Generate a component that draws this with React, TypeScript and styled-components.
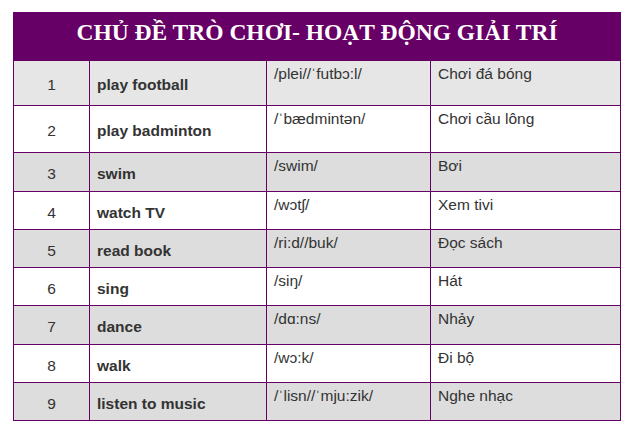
import styled, { createGlobalStyle } from 'styled-components';

type Item = { no: number; word: string; ipa: string; meaning: string; height: number };

const items: Item[] = [
  { no: 1, word: 'play football', ipa: '/plei//ˈfutbɔ:l/', meaning: 'Chơi đá bóng', height: 45 },
  { no: 2, word: 'play badminton', ipa: '/ˈbædmintən/', meaning: 'Chơi cầu lông', height: 47 },
  { no: 3, word: 'swim', ipa: '/swim/', meaning: 'Bơi', height: 39 },
  { no: 4, word: 'watch TV', ipa: '/wɔtʃ/', meaning: 'Xem tivi', height: 38 },
  { no: 5, word: 'read book', ipa: '/ri:d//buk/', meaning: 'Đọc sách', height: 38 },
  { no: 6, word: 'sing', ipa: '/siŋ/', meaning: 'Hát', height: 38 },
  { no: 7, word: 'dance', ipa: '/dɑ:ns/', meaning: 'Nhảy', height: 39 },
  { no: 8, word: 'walk', ipa: '/wɔ:k/', meaning: 'Đi bộ', height: 38 },
  { no: 9, word: 'listen to music', ipa: '/ˈlisn//ˈmju:zik/', meaning: 'Nghe nhạc', height: 38 },
];

const columns = [76, 177, 164, 190];

const GlobalStyle = createGlobalStyle`
  body {
    margin: 0;
    background: #ffffff;
    font-family: "Liberation Sans", Arial, sans-serif;
  }
`;

const Page = styled.div`
  padding: 12px 0 0 13px;
`;

const Table = styled.table`
  width: 607px;
  border-collapse: collapse;
  table-layout: fixed;
  color: #333333;
  font-size: 15.5px;
`;

const Col = styled.col<{ $w: number }>`
  width: ${(p) => p.$w}px;
`;

const TitleRow = styled.tr`
  height: 48px;
`;

const TitleCell = styled.th`
  padding: 0 0 10px;
  background: #660066;
  color: #ffffff;
  font-family: "Liberation Serif", "Times New Roman", serif;
  font-size: 23.5px;
  font-weight: bold;
  text-align: center;
  border: 1px solid #660066;
  line-height: 26px;
`;

const Row = styled.tr<{ $shade: string; $h: number }>`
  background: ${(p) => p.$shade};
  height: ${(p) => p.$h}px;
`;

const Cell = styled.td<{ $top?: boolean; $center?: boolean; $bold?: boolean }>`
  border: 1px solid #660066;
  padding: ${(p) => (p.$top ? '4px 7px 0' : '4px 7px 0')};
  vertical-align: ${(p) => (p.$top ? 'top' : 'middle')};
  text-align: ${(p) => (p.$center ? 'center' : 'left')};
  font-weight: ${(p) => (p.$bold ? 'bold' : 'normal')};
  line-height: 18px;
`;

const shadeFor = (no: number) => (no === 1 ? '#e6e6e6' : no % 2 === 1 ? '#dddddd' : '#ffffff');

export default function App() {
  return (
    <Page>
      <GlobalStyle />
      <Table>
        <colgroup>
          {columns.map((w, i) => (
            <Col key={i} $w={w} />
          ))}
        </colgroup>
        <thead>
          <TitleRow>
            <TitleCell colSpan={4}>CHỦ ĐỀ TRÒ CHƠI- HOẠT ĐỘNG GIẢI TRÍ</TitleCell>
          </TitleRow>
        </thead>
        <tbody>
          {items.map((it) => (
            <Row key={it.no} $shade={shadeFor(it.no)} $h={it.height}>
              <Cell $center>{it.no}</Cell>
              <Cell $bold>{it.word}</Cell>
              <Cell $top>{it.ipa}</Cell>
              <Cell $top>{it.meaning}</Cell>
            </Row>
          ))}
        </tbody>
      </Table>
    </Page>
  );
}
